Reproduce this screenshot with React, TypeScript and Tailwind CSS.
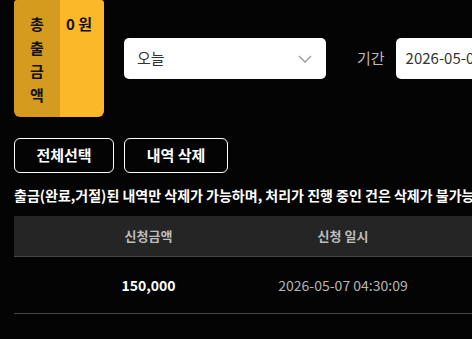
export default function App() {
  return (
    <div
      className="h-[339px] w-[472px] overflow-hidden bg-[#040404] text-white"
      style={{ fontFamily: '"Noto Sans CJK KR", "Noto Sans", sans-serif' }}
    >
      <div className="w-[760px] px-[14px]">
        {/* Top row */}
        <div className="flex items-center">
          <div className="flex h-[117px] w-[90px] overflow-hidden rounded-b-[6px] rounded-t-[3px]">
            <div className="flex w-[46px] flex-col items-center bg-[#d59b1e] pt-[12px] text-[15px] font-bold leading-[23.5px] text-[#111]">
              <span>총</span>
              <span>출</span>
              <span>금</span>
              <span>액</span>
            </div>
            <div className="flex-1 bg-[#fbb829] pl-[6px] pt-[12px] text-[15px] font-bold leading-[23.5px] text-[#111]">
              0 원
            </div>
          </div>

          <div className="ml-[20px] flex h-[41px] w-[202px] items-center justify-between rounded-[5px] bg-white pl-[13px] pr-[14px] text-[15px] text-[#333]">
            <span>오늘</span>
            <svg width="14" height="8" viewBox="0 0 14 8" fill="none">
              <path d="M1 1l6 6 6-6" stroke="#999" strokeWidth="1.3" />
            </svg>
          </div>

          <span className="ml-[31px] text-[15px] text-[#bbb]">기간</span>
          <div className="ml-[11px] flex h-[41px] w-[200px] items-center rounded-[5px] bg-white pl-[10px] text-[15px] text-[#333]">
            2026-05-07
          </div>
        </div>

        {/* Buttons */}
        <div className="mt-[21px] flex gap-[10px]">
          <button className="h-[35px] w-[100px] rounded-[6px] border border-white text-[15px] font-bold">
            전체선택
          </button>
          <button className="h-[35px] w-[104px] rounded-[6px] border border-white text-[15px] font-bold">
            내역 삭제
          </button>
        </div>

        <p className="mt-[12px] whitespace-nowrap text-[14px] font-bold leading-[20px]">
          출금(완료,거절)된 내역만 삭제가 가능하며, 처리가 진행 중인 건은 삭제가 불가능합니다.
        </p>

        {/* Table */}
        <div className="mt-[11px]">
          <div className="grid h-[41px] grid-cols-[20px_229px_160px_1fr] items-center border-b border-[#444] bg-[#252525] text-[13px] font-bold text-[#bdbdbd]">
            <span />
            <span className="text-center">신청금액</span>
            <span className="text-center">신청 일시</span>
            <span className="text-center">상태</span>
          </div>
          <div className="grid h-[57px] grid-cols-[20px_229px_160px_1fr] items-center border-b border-[#444] bg-[#040404]">
            <span />
            <span className="text-center text-[14px] font-bold text-white">150,000</span>
            <span className="text-center text-[14px] text-[#b5b5b5]">2026-05-07 04:30:09</span>
            <span />
          </div>
        </div>
      </div>
    </div>
  );
}
